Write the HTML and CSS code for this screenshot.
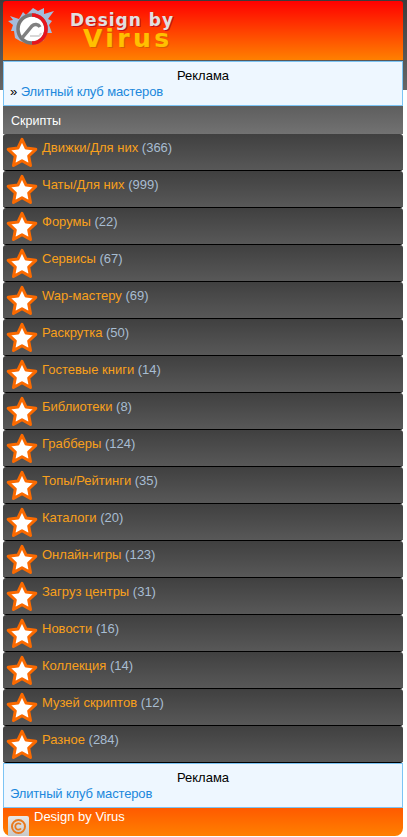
FILE: index.html
```html
<!DOCTYPE html>
<html lang="ru">
<head>
    <meta charset="UTF-8">
    <meta name="viewport" content="width=device-width, initial-scale=1.0">
    <title>Design by Virus</title>
    <link rel="stylesheet" href="styles.css">
</head>
<body>
    <svg class="defs" width="0" height="0">
        <symbol id="star" viewBox="0 0 32 32">
            <path d="M16 3.300L20.100 12.100 29.800 13.300 22.700 20 24.500 29.500 16 24.800 7.500 29.500 9.300 20 2.200 13.300 11.900 12.100z" fill="#fff" stroke="#fb6a00" stroke-width="3" stroke-linejoin="round"/>
        </symbol>
    </svg>

    <div class="header">
        <svg class="logo" width="54" height="44" viewBox="0 0 54 44">
            <path d="M3 10l9 3 4-7 3 3 7-7 5 3 6-3 0 6 10-3-6 8 4 2-3 4 3 8-7 0-1 7-6 3-4-1-6 2-8-3-5-3-1-7-3 0 2-6-5-4 5-1z" fill="#a4bcdc"/>
            <circle cx="25" cy="23" r="14" fill="#fff" stroke="#777" stroke-width="3.500"/>
            <path d="M25 7.200a15.800 15.800 0 0 1 0 31.600v-3.500a12.300 12.300 0 0 0 0-24.600z" fill="#e8141c"/>
            <path d="M15 32l10-12a5 5 0 0 1 8 1" fill="none" stroke="#808080" stroke-width="3.500"/>
            <path d="M23 30h9a5 5 0 0 0 2-3" fill="none" stroke="#d8d8d8" stroke-width="2"/>
        </svg>
        <div class="brand">
            <div class="brand-top">Design by</div>
            <div class="brand-bottom">Virus</div>
        </div>
    </div>

    <div class="ad ad-top">
        <div class="ad-title">Реклама</div>
        <div>» <a href="#">Элитный клуб мастеров</a></div>
    </div>

    <div class="title">Скрипты</div>

    <div class="item"><svg class="star"><use href="#star"/></svg><span class="item-text"><a href="#">Движки/Для них</a> (366)</span></div>
    <div class="item"><svg class="star"><use href="#star"/></svg><span class="item-text"><a href="#">Чаты/Для них</a> (999)</span></div>
    <div class="item"><svg class="star"><use href="#star"/></svg><span class="item-text"><a href="#">Форумы</a> (22)</span></div>
    <div class="item"><svg class="star"><use href="#star"/></svg><span class="item-text"><a href="#">Сервисы</a> (67)</span></div>
    <div class="item"><svg class="star"><use href="#star"/></svg><span class="item-text"><a href="#">Wap-мастеру</a> (69)</span></div>
    <div class="item"><svg class="star"><use href="#star"/></svg><span class="item-text"><a href="#">Раскрутка</a> (50)</span></div>
    <div class="item"><svg class="star"><use href="#star"/></svg><span class="item-text"><a href="#">Гостевые книги</a> (14)</span></div>
    <div class="item"><svg class="star"><use href="#star"/></svg><span class="item-text"><a href="#">Библиотеки</a> (8)</span></div>
    <div class="item"><svg class="star"><use href="#star"/></svg><span class="item-text"><a href="#">Грабберы</a> (124)</span></div>
    <div class="item"><svg class="star"><use href="#star"/></svg><span class="item-text"><a href="#">Топы/Рейтинги</a> (35)</span></div>
    <div class="item"><svg class="star"><use href="#star"/></svg><span class="item-text"><a href="#">Каталоги</a> (20)</span></div>
    <div class="item"><svg class="star"><use href="#star"/></svg><span class="item-text"><a href="#">Онлайн-игры</a> (123)</span></div>
    <div class="item"><svg class="star"><use href="#star"/></svg><span class="item-text"><a href="#">Загруз центры</a> (31)</span></div>
    <div class="item"><svg class="star"><use href="#star"/></svg><span class="item-text"><a href="#">Новости</a> (16)</span></div>
    <div class="item"><svg class="star"><use href="#star"/></svg><span class="item-text"><a href="#">Коллекция</a> (14)</span></div>
    <div class="item"><svg class="star"><use href="#star"/></svg><span class="item-text"><a href="#">Музей скриптов</a> (12)</span></div>
    <div class="item"><svg class="star"><use href="#star"/></svg><span class="item-text"><a href="#">Разное</a> (284)</span></div>

    <div class="ad">
        <div class="ad-title">Реклама</div>
        <div><a href="#">Элитный клуб мастеров</a></div>
    </div>

    <div class="footer">
        <div class="copy">
            <svg width="21" height="20" viewBox="0 0 21 20">
                <circle cx="10.500" cy="10.500" r="6.500" fill="none" stroke="#e87a20" stroke-width="2"/>
                <path d="M13 8.500a3.200 3.200 0 1 0 0 4" fill="none" stroke="#e87a20" stroke-width="1.800"/>
            </svg>
        </div>
        <span>Design by Virus</span>
    </div>
</body>
</html>
```

FILE: styles.css
```css
body {
    margin: 0;
    padding: 1px 4px 0 3px;
    font-family: "Liberation Sans", Arial, sans-serif;
    font-size: 13px;
    background: #fff linear-gradient(#3c3c3c, #666) no-repeat 0 0 / 100% 90px;
}

a {
    text-decoration: none;
}

.defs {
    display: block;
    height: 0;
}

.header {
    height: 59px;
    display: flex;
    padding-left: 4px;
    box-sizing: border-box;
    border-radius: 3px 3px 0 0;
    background: linear-gradient(#ff0000, #ff8000);
}

.logo {
    margin-top: 5px;
}

.brand {
    margin-left: 9px;
    font-family: "DejaVu Sans", sans-serif;
    font-weight: bold;
}

.brand-top {
    margin-top: 11px;
    font-size: 17px;
    line-height: 17px;
    letter-spacing: 1px;
    color: #e0e0e0;
    text-shadow: 1px 1px 0 #c01020;
}

.brand-bottom {
    margin-left: 13px;
    font-size: 25px;
    line-height: 20px;
    letter-spacing: 3.400px;
    color: #ffc000;
    text-shadow: 1px 1px 0 #d86000;
}

.ad {
    height: 45px;
    box-sizing: border-box;
    padding: 6px 6px 0 6px;
    line-height: 16px;
    color: #000;
    background: #eef7ff;
    border: 1px solid #7cc4f4;
}

.ad-top {
    margin-top: 1px;
}

.ad a {
    color: #2088dc;
    letter-spacing: -0.150px;
}

.ad-title {
    text-align: center;
}

.title {
    height: 28px;
    box-sizing: border-box;
    padding: 7px 8px;
    font-size: 12.500px;
    line-height: 16px;
    color: #fff;
    background: linear-gradient(#5e5e5e, #727272);
}

.item {
    height: 37px;
    box-sizing: border-box;
    display: flex;
    color: #a8bdd2;
    border-bottom: 1px solid #000;
    border-radius: 3px;
    background: linear-gradient(#404040, #585858);
}

.star {
    width: 32px;
    height: 32px;
    margin: 2px 0 0 3px;
    flex-shrink: 0;
}

.item-text {
    margin: 6px 0 0 4px;
    line-height: 16px;
}

.item-text a {
    color: #f9a01b;
}

.footer {
    height: 28px;
    display: flex;
    padding-left: 5px;
    box-sizing: border-box;
    color: #fff;
    line-height: 16px;
    border-radius: 0 0 8px 8px;
    background: linear-gradient(#ff5a00, #ff8000);
}

.footer span {
    margin: 1px 0 0 5px;
}

.copy {
    width: 21px;
    height: 20px;
    margin-top: 8px;
    border-radius: 2px 2px 0 0;
    background: linear-gradient(#e8e8e8, #c8c8c8);
}
```
